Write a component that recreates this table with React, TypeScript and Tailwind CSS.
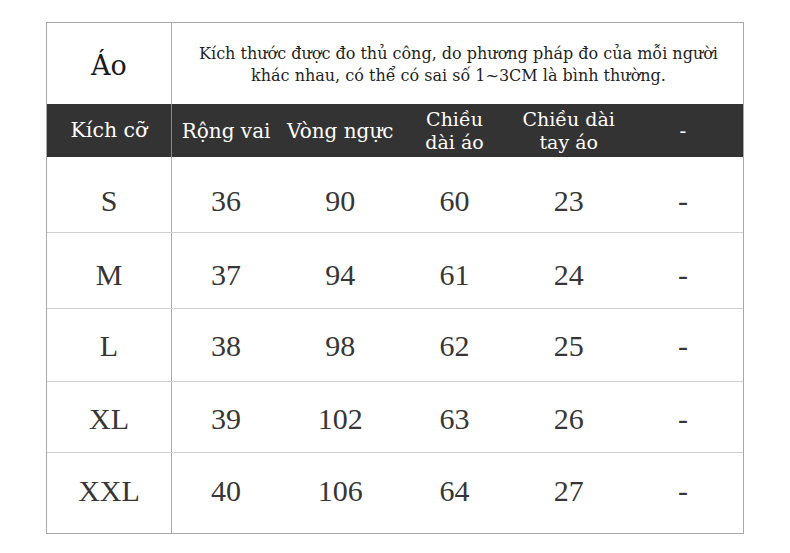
const HEAD_FONT = "font-['DejaVu_Serif','Noto_Serif',serif]";
const BODY_FONT = "font-['Liberation_Serif','Times_New_Roman',serif]";

const ROWS = [
  { size: "S", values: ["36", "90", "60", "23", "-"], h: "h-[76px]", pad: "pt-[12px]" },
  { size: "M", values: ["37", "94", "61", "24", "-"], h: "h-[76px]", pad: "pt-[8px]" },
  { size: "L", values: ["38", "98", "62", "25", "-"], h: "h-[73px]", pad: "pt-[1px]" },
  { size: "XL", values: ["39", "102", "63", "26", "-"], h: "h-[71px]", pad: "pt-[2px]" },
  { size: "XXL", values: ["40", "106", "64", "27", "-"], h: "h-[80px]", pad: "pb-[6px]" },
];

export default function App() {
  return (
    <div className="w-[790px] h-[553px] bg-white pt-[22px] pl-[46px]">
      <div className="w-[698px] border border-[#a9a9a9]">
        {/* Title row */}
        <div className="flex h-[81px]">
          <div className={`w-[125px] border-r border-[#a9a9a9] flex items-center justify-center pt-[6px] text-[27px] text-[#1a1a1a] ${HEAD_FONT}`}>
            Áo
          </div>
          <div className={`flex-1 flex items-center justify-center text-center text-[16px] leading-[22px] text-[#1f1f1f] pt-[3px] pl-[2px] ${HEAD_FONT}`}>
            <p>
              Kích thước được đo thủ công, do phương pháp đo của mỗi người
              <br />
              khác nhau, có thể có sai số 1~3CM là bình thường.
            </p>
          </div>
        </div>

        {/* Header row */}
        <div className={`grid grid-cols-[125px_repeat(5,1fr)] h-[53px] bg-[#333333] text-white ${HEAD_FONT}`}>
          <div className="border-r border-[#8a8a8a] flex items-center justify-center text-[20.5px]">Kích cỡ</div>
          <div className="flex items-center justify-center pr-[6px] text-[20px]">Rộng vai</div>
          <div className="flex items-center justify-center pr-[6px] text-[20px]">Vòng ngực</div>
          <div className="flex items-center justify-center pr-[6px] text-[19px] leading-[23px] text-center">
            <span>
              Chiều
              <br />
              dài áo
            </span>
          </div>
          <div className="flex items-center justify-center pr-[6px] text-[19px] leading-[23px] text-center">
            <span>
              Chiều dài
              <br />
              tay áo
            </span>
          </div>
          <div className="flex items-center justify-center pr-[6px] text-[20px]">-</div>
        </div>

        {/* Body rows */}
        {ROWS.map((row, i) => (
          <div
            key={row.size}
            className={`grid grid-cols-[125px_repeat(5,1fr)] ${row.h} ${
              i < ROWS.length - 1 ? "border-b border-[#d0d0d0]" : ""
            } text-[30px] text-[#363636] ${BODY_FONT}`}
          >
            <div className={`border-r border-[#a9a9a9] flex items-center justify-center ${row.pad}`}>{row.size}</div>
            {row.values.map((v, j) => (
              <div key={j} className={`flex items-center justify-center pr-[6px] ${row.pad}`}>
                {v}
              </div>
            ))}
          </div>
        ))}
      </div>
    </div>
  );
}
